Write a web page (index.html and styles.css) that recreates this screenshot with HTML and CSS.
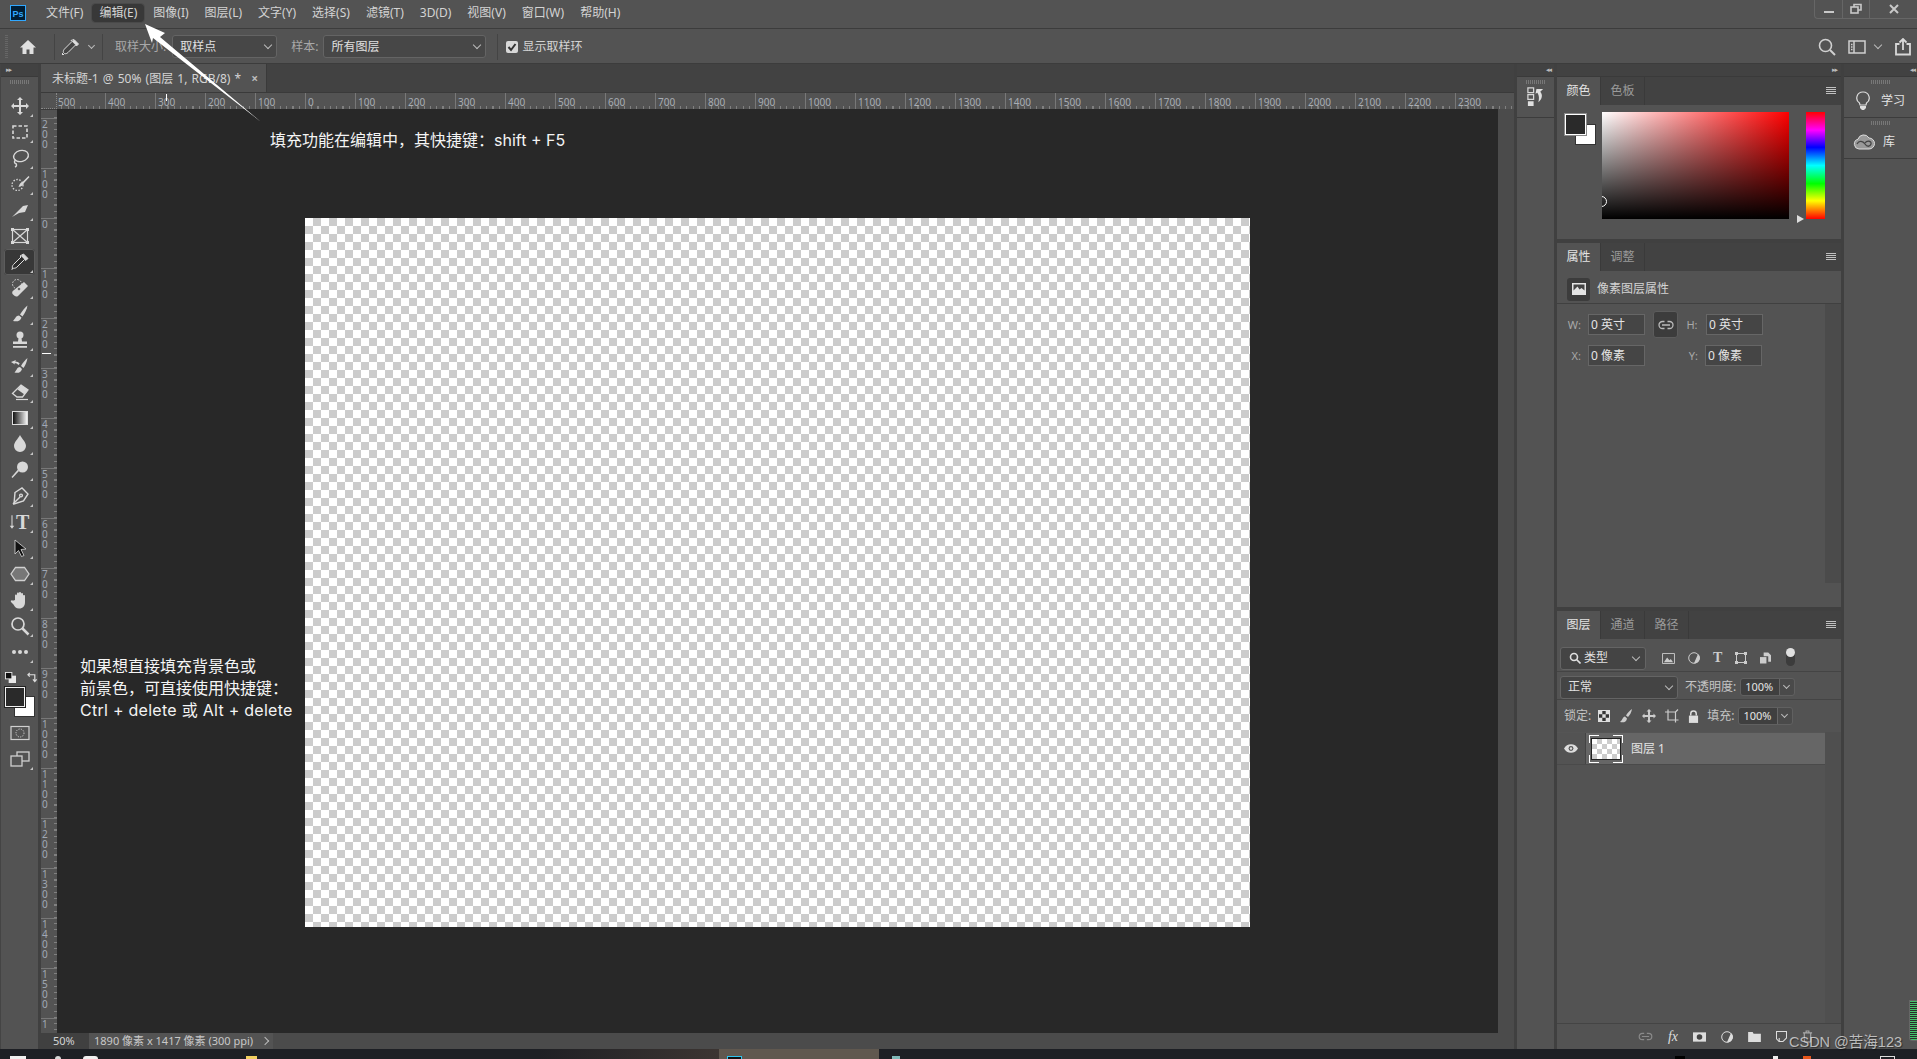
FILE: index.html
```html
<!DOCTYPE html>
<html lang="zh-CN">
<head>
  <meta charset="UTF-8" />
  <title>未标题-1 @ 50% (图层 1, RGB/8) *</title>
  <link rel="stylesheet" href="styles.css">
</head>
<body>
  <div class="menubar">
    <svg class="ps-logo" viewBox="0 0 16 16"><rect x="0.5" y="0.5" width="15" height="15" fill="#001e36" stroke="#31a8ff"/><text x="2.500" y="11.500" class="ps-text">Ps</text></svg>
    <nav class="menu">
      <span>文件(F)</span><span class="on">编辑(E)</span><span>图像(I)</span><span>图层(L)</span><span>文字(Y)</span><span>选择(S)</span><span>滤镜(T)</span><span>3D(D)</span><span>视图(V)</span><span>窗口(W)</span><span>帮助(H)</span>
    </nav>
    <div class="winctl">
      <span><svg viewBox="0 0 12 12" width="12" height="12"><rect x="1" y="8" width="10" height="2" fill="#c8c8c8"/></svg></span>
      <span><svg viewBox="0 0 12 12" width="12" height="12" fill="none" stroke="#c8c8c8" stroke-width="1.6"><rect x="1" y="4" width="7" height="6"/><path d="M4 4V1.5h7V7H8"/></svg></span>
      <span><svg viewBox="0 0 12 12" width="12" height="12" stroke="#c8c8c8" stroke-width="2"><path d="M2 2l8 8M10 2l-8 8"/></svg></span>
    </div>
  </div>

  <div class="optionsbar">
    <i class="grip-v"></i>
    <svg class="home" viewBox="0 0 18 18"><path d="M9 2L1 9.500h2.500V16h4v-4.500h3V16h4V9.500H17z" fill="#e0e0e0"/></svg>
    <i class="sep"></i>
    <svg class="ic eyedrop-opt" viewBox="0 0 20 20"><path d="M13 2.500l4.500 4.500-2 2-1-1-7.500 7.500c-1 1-2.500 1.500-3.500 1l-1.500 1.500-1-1 1.500-1.500c-.5-1 0-2.500 1-3.500l7.500-7.500-1-1z" fill="#444" stroke="#ddd"/><path d="M13 2.500l4.500 4.500-2 2-4.500-4.500z" fill="#ddd"/></svg>
    <i class="chev opt-chev"></i>
    <i class="sep"></i>
    <span class="opt-label">取样大小:</span>
    <div class="select sample-size">取样点<i class="chev"></i></div>
    <span class="opt-label sample-label">样本:</span>
    <div class="select sample-layers">所有图层<i class="chev"></i></div>
    <i class="sep sep-check"></i>
    <span class="check"><svg viewBox="0 0 12 12"><path d="M2.500 6l2.500 3 4.500-6" fill="none" stroke="#333" stroke-width="2"/></svg></span>
    <span class="opt-label check-label">显示取样环</span>
    <div class="opt-right">
      <svg class="ic" viewBox="0 0 20 20" fill="none" stroke="#d0d0d0" stroke-width="1.600"><circle cx="8.500" cy="8.500" r="6"/><path d="M13 13l5 5" stroke-width="2"/></svg>
      <svg class="ic workspace" viewBox="0 0 18 16" fill="none" stroke="#d0d0d0" stroke-width="1.500"><rect x="1" y="2" width="16" height="12"/><path d="M6 2v12M3 5.500h1.500M3 8h1.500M3 10.500h1.500" /></svg>
      <i class="chev"></i>
      <svg class="ic share" viewBox="0 0 18 18" fill="none" stroke="#d8d8d8" stroke-width="1.800"><path d="M5.500 6H2v10.500h14V6h-3.500M9 12V1.500M5.500 4.500L9 1l3.500 3.500"/></svg>
    </div>
  </div>

  <div class="workspace-row">
    <aside class="toolbar">
      <div class="strip"><span class="arrows">▸▸</span></div>
      <i class="grip"></i>
      <div class="tools">
        <div class="tool more"><svg class="ic" viewBox="0 0 20 20"><path d="M10 1l3 3h-2v5h5V7l3 3-3 3v-2h-5v5h2l-3 3-3-3h2v-5H4v2l-3-3 3-3v2h5V4H7z"/></svg></div>
        <div class="tool more"><svg class="ic" viewBox="0 0 20 20" fill="none" stroke="#d8d8d8" stroke-width="1.600"><rect x="3" y="4" width="14" height="12" stroke-dasharray="3.500 2"/></svg></div>
        <div class="tool more"><svg class="ic" viewBox="0 0 20 20" fill="none" stroke="#d8d8d8" stroke-width="1.400"><ellipse cx="11" cy="8" rx="7.500" ry="5.500" transform="rotate(-15 11 8)"/><path d="M6 12c-2 1-2 3-.500 3.500S7 18 5 19"/></svg></div>
        <div class="tool more"><svg class="ic" viewBox="0 0 20 20"><circle cx="7.500" cy="11" r="5.500" fill="none" stroke="#d8d8d8" stroke-dasharray="1.500 1.500" stroke-width="1.300"/><path d="M18.500 2l-6 6c-2 .5-3 2-4 5 3-.5 4.500-1.500 5.500-4l5.500-6z"/></svg></div>
        <div class="tool more"><svg class="ic" viewBox="0 0 20 20"><path d="M2 17L13 6l5-1-3 7-6 1z"/></svg></div>
        <div class="tool"><svg class="ic" viewBox="0 0 20 20" fill="none" stroke="#d8d8d8" stroke-width="1.200"><rect x="2.500" y="3.500" width="15" height="13"/><path d="M2.500 3.500l15 13M17.500 3.500l-15 13"/><path d="M1 2h3v3H1zM16 2h3v3h-3zM1 15h3v3H1zM16 15h3v3h-3z" fill="#d8d8d8" stroke="none"/></svg></div>
        <div class="tool active more"><svg class="ic" viewBox="0 0 20 20"><path d="M13.500 2l4.500 4.500-2.500 2-1-1-7.500 7.500c-1 1-2.500 1.500-3.500 1L2 17.500 2.500 16c-.500-1 0-2.500 1-3.500L11 5l-1-1z" fill="#2e2e2e" stroke="#e0e0e0"/><path d="M13.500 2L18 6.500 15.500 8.500 11 4z"/></svg></div>
        <div class="tool more"><svg class="ic" viewBox="0 0 20 20"><circle cx="7" cy="6" r="4.500" fill="none" stroke="#d8d8d8" stroke-dasharray="1.500 1.500"/><path d="M14 4l4 4L8 18c-1 .8-2.500.8-3.500-.2L3 16.500c-1-1-1-2.500-.2-3.500z"/><path d="M9 9.500l1.500 1.500L9 12.500 7.500 11z" fill="#555"/></svg></div>
        <div class="tool more"><svg class="ic" viewBox="0 0 20 20"><path d="M17.500 1.500c-2.500 2-5.500 5.500-7.500 9l2.500 2c2.500-3.500 4.500-7.500 5-11z"/><path d="M9 11.500c-3 0-3.500 3-6 5.500 4 1 7.500 0 8.500-3.500z"/></svg></div>
        <div class="tool more"><svg class="ic" viewBox="0 0 20 20"><circle cx="10" cy="5" r="3.500"/><path d="M8.500 8h3l.5 3.500h5V14H3v-2.500h5zM3 16h14v1.800H3z"/></svg></div>
        <div class="tool more"><svg class="ic" viewBox="0 0 20 20"><path d="M17.500 2c-2.500 2-5 5-6.500 8l2.500 2c2-3 3.500-6.500 4-10z"/><path d="M10 11c-3 0-3 3-5.500 5.500 3.500 1 6.500 0 7.500-3.500z"/><path d="M1 6l5-2-.8 1.500c2 0 3.500.8 4.500 2L8.500 9C7.500 7.800 6 7 4.500 7L5 8.500z"/></svg></div>
        <div class="tool more"><svg class="ic" viewBox="0 0 20 20"><path d="M11 3l7 5-5.500 7H7l-4.500-3.500z" fill="none" stroke="#d8d8d8" stroke-width="1.300"/><path d="M11 3l7 5-3.500 4.500-7-5z"/><path d="M6 17.500h12" stroke="#d8d8d8" stroke-width="1.200"/></svg></div>
        <div class="tool more"><span class="grad-ic"></span></div>
        <div class="tool more"><svg class="ic" viewBox="0 0 20 20"><path d="M10 1c2 4 6 7 6 11a6 6 0 0 1-12 0c0-4 4-7 6-11z"/></svg></div>
        <div class="tool more"><svg class="ic" viewBox="0 0 20 20"><circle cx="12.500" cy="7" r="5.500"/><path d="M9 11l-6.500 7-1-1 6.500-7.500z"/></svg></div>
        <div class="tool more"><svg class="ic" viewBox="0 0 20 20" fill="none" stroke="#d8d8d8" stroke-width="1.400"><path d="M5 6.500l7-4.500 6 6-4.500 7-9.500 3z"/><path d="M3 18l7-7"/><circle cx="11" cy="9.500" r="1.400"/></svg></div>
        <div class="tool type-tool more"><svg class="ic arrow-down" viewBox="0 0 8 20"><path d="M3.300 1h1.400v14H7l-3 4-3-4h2.300z"/></svg><span class="tool-t">T</span></div>
        <div class="tool more"><svg class="ic" viewBox="0 0 20 20"><path d="M5 2l11 9-5 .5 3 6-2.500 1-3-6L5 16z" fill="#111" stroke="#d8d8d8" stroke-width=".8"/></svg></div>
        <div class="tool more"><svg class="ic" viewBox="0 0 20 20"><path d="M5.500 3.500h9L19 10l-4.500 6.500h-9L1 10z" fill="#777" stroke="#d0d0d0" stroke-width="1.300"/></svg></div>
        <div class="tool more"><svg class="ic" viewBox="0 0 20 20"><path d="M5 10V5.500c0-1.500 2-1.500 2 0V3.500c0-1.500 2-1.500 2 0V3c0-1.500 2-1.500 2 0v1c0-1.500 2-1.500 2 0v2c0-1.300 2-1.300 2 0v6c0 4-2 6.500-6 6.500-3 0-4-1.500-5.500-4L1 12c-.8-1.300.8-2.300 1.800-1.300z"/></svg></div>
        <div class="tool more"><svg class="ic" viewBox="0 0 20 20" fill="none" stroke="#d8d8d8"><circle cx="8" cy="8" r="6" stroke-width="1.700"/><path d="M12.500 12.500l6 6" stroke-width="2.500"/></svg></div>
        <div class="tool more"><svg class="ic" viewBox="0 0 20 20"><circle cx="4" cy="10" r="2"/><circle cx="10" cy="10" r="2"/><circle cx="16" cy="10" r="2"/></svg></div>
      </div>
      <div class="swatch-tools">
        <svg class="mini-default" viewBox="0 0 12 12"><rect x="4" y="4" width="8" height="8" fill="#e8e8e8"/><rect x=".5" y=".5" width="7" height="7" fill="#111" stroke="#e8e8e8"/></svg>
        <svg class="mini-swap" viewBox="0 0 12 12" fill="none" stroke="#ddd" stroke-width="1.300"><path d="M1 3h7.500v7M3 1L1 3l2 2M6.500 8l2 2.500L10.500 8"/></svg>
      </div>
      <div class="swatches">
        <span class="bg-chip"></span>
        <span class="fg-chip"></span>
      </div>
      <div class="tool mask-tool"><svg class="ic" viewBox="0 0 20 16" fill="none" stroke="#d0d0d0"><rect x="1" y="1.500" width="18" height="13" stroke-width="1.200"/><circle cx="10" cy="8" r="4" stroke-dasharray="1.200 1.200"/></svg></div>
      <div class="tool more"><svg class="ic" viewBox="0 0 20 18" fill="none" stroke="#d0d0d0" stroke-width="1.300"><rect x="7" y="2" width="12" height="9"/><rect x="1" y="6" width="11" height="10" fill="#535353"/></svg></div>
    </aside>

    <main class="doc">
      <div class="tabbar">
        <div class="tab">未标题-1 @ 50% (图层 1, RGB/8) * <span class="tab-x">×</span></div>
      </div>
      <div class="ruler-top">
        <i class="ruler-corner"></i>
        <span>500</span><span>400</span><span>300</span><span>200</span><span>100</span><span>0</span><span>100</span><span>200</span><span>300</span><span>400</span><span>500</span><span>600</span><span>700</span><span>800</span><span>900</span><span>1000</span><span>1100</span><span>1200</span><span>1300</span><span>1400</span><span>1500</span><span>1600</span><span>1700</span><span>1800</span><span>1900</span><span>2000</span><span>2100</span><span>2200</span><span>2300</span>
        <i class="ruler-mark-x"></i>
      </div>
      <div class="doc-mid">
        <div class="ruler-left">
          <span>200</span><span>100</span><span>0</span><span>100</span><span>200</span><span>300</span><span>400</span><span>500</span><span>600</span><span>700</span><span>800</span><span>900</span><span>1000</span><span>1100</span><span>1200</span><span>1300</span><span>1400</span><span>1500</span><span>1</span>
          <i class="ruler-mark-y"></i>
        </div>
        <div class="pasteboard">
          <div class="canvas"></div>
        </div>
        <div class="vscroll"></div>
      </div>
      <div class="statusbar">
        <span class="zoom-pct">50%</span>
        <span class="doc-info">1890 像素 x 1417 像素 (300 ppi)<i class="chev-right"></i></span>
      </div>
    </main>

    <div class="dock dock-narrow">
      <div class="strip strip-right"><span class="arrows">◂◂</span></div>
      <div class="dock-item">
        <i class="grip"></i>
        <svg class="history-ic" viewBox="0 0 20 20"><path d="M2 1h6v5H2zM2 8h6v5H2z" fill="none" stroke="#d8d8d8" stroke-width="1.300"/><path d="M2 15h6v5H2zM11 2h7l-3 3c3 3 2 8-2 11 1-4 1-7-1-10l-2 1z" fill="#e0e0e0"/></svg>
      </div>
    </div>

    <div class="dock dock-main">
      <div class="strip strip-main"><span class="arrows">▸▸</span></div>

      <section class="panel panel-color">
        <div class="tabs"><span class="on">颜色</span><span>色板</span><i class="panel-menu"></i></div>
        <div class="color-body">
          <div class="color-chips"><span class="c-bg"></span><span class="c-fg"></span></div>
          <div class="picker"><i class="picker-handle"></i></div>
          <div class="hue"><i class="hue-arrow"></i></div>
        </div>
      </section>

      <section class="panel panel-props">
        <div class="tabs"><span class="on">属性</span><span>调整</span><i class="panel-menu"></i></div>
        <div class="props-head">
          <span class="props-icon"><svg viewBox="0 0 14 12" width="14" height="12"><path d="M0 0h14v12H0z" fill="#e4e4e4"/><path d="M1.500 1.500h11v6l-3-2.500-2 1.500-2-3-4 4z" fill="#444"/></svg></span>
          像素图层属性
        </div>
        <div class="props-body">
          <div class="props-fields">
            <div class="field-row">
              <label class="fl-w">W:</label><span class="num">0 英寸</span>
              <span class="link-btn"><svg viewBox="0 0 16 10" width="16" height="10" fill="none" stroke="#bbb" stroke-width="1.300"><path d="M6.500 1.500H4.500a3.500 3.500 0 0 0 0 7h2M9.500 1.500h2a3.500 3.500 0 0 1 0 7h-2M4 5h8"/></svg></span>
              <label class="fl-h">H:</label><span class="num">0 英寸</span>
            </div>
            <div class="field-row">
              <label class="fl-w">X:</label><span class="num">0 像素</span>
              <label class="fl-y">Y:</label><span class="num">0 像素</span>
            </div>
          </div>
          <div class="panel-scroll"></div>
        </div>
      </section>

      <section class="panel panel-layers">
        <div class="tabs"><span class="on">图层</span><span>通道</span><span>路径</span><i class="panel-menu"></i></div>
        <div class="layer-row-filter">
          <div class="select filter-select"><svg viewBox="0 0 12 12" width="12" height="12" fill="none" stroke="#e0e0e0" stroke-width="1.600"><circle cx="5" cy="5" r="3.500"/><path d="M7.500 7.500l4 4"/></svg>类型<i class="chev"></i></div>
          <div class="filter-icons">
            <svg viewBox="0 0 14 12" width="13" height="11"><path d="M.5.500h13v11H.5z" fill="none" stroke="#ccc"/><path d="M2 10l3.500-5 2.500 3 1.500-1.500L12 10z" fill="#ccc"/></svg>
            <svg viewBox="0 0 12 12" width="12" height="12"><circle cx="6" cy="6" r="5.300" fill="none" stroke="#ccc"/><path d="M10 2A5.300 5.300 0 0 1 6 11.300z" fill="#ccc"/></svg>
            <span class="filter-t">T</span>
            <svg viewBox="0 0 12 12" width="12" height="12" fill="none" stroke="#ccc"><rect x="1.500" y="1.500" width="9" height="9"/><path d="M0 0h3v3H0zM9 0h3v3H9zM0 9h3v3H0zM9 9h3v3H9z" fill="#ccc" stroke="none"/></svg>
            <svg viewBox="0 0 12 12" width="11" height="12"><path d="M4 0h5l3 3v7H9V4H4z" fill="#ccc"/><rect x="0" y="5" width="7" height="7" fill="#ccc"/></svg>
          </div>
          <span class="filter-toggle"><i></i></span>
        </div>
        <div class="layer-row-mode">
          <div class="select mode-select">正常<i class="chev"></i></div>
          <span class="mini-label">不透明度:</span>
          <span class="pct">100%<i class="chev"></i></span>
        </div>
        <div class="layer-row-lock">
          <span class="mini-label">锁定:</span>
          <div class="lock-icons">
            <svg viewBox="0 0 12 12" width="12" height="12"><rect x=".5" y=".5" width="11" height="11" fill="#333" stroke="#ddd"/><path d="M1 1h3.300v3.300H1zM7.700 1H11v3.300H7.700zM4.300 4.300h3.400v3.400H4.300zM1 7.700h3.300V11H1zM7.700 7.700H11V11H7.700z" fill="#ddd"/></svg>
            <svg viewBox="0 0 14 14" width="14" height="14"><path d="M13 0C11 1.500 8 4 7 6.500l2 1.500c2-2 3.500-5 4-8z" fill="#ccc"/><path d="M6 7.500C3.500 8 4 10.500 1 13c3.500 1 6.500 0 7-3.500z" fill="#ccc"/></svg>
            <svg viewBox="0 0 14 14" width="14" height="14"><path d="M7 0l2.500 2.500H8V6h3.500V4.500L14 7l-2.500 2.500V8H8v3.500h1.500L7 14l-2.500-2.500H6V8H2.500v1.500L0 7l2.500-2.500V6H6V2.500H4.500z" fill="#ccc"/></svg>
            <svg viewBox="0 0 14 14" width="14" height="14" fill="none" stroke="#ccc" stroke-width="1.200"><path d="M0 3h10.500v10.500M3 .5V11h10.500M10.500 3L13 .5" /></svg>
            <svg viewBox="0 0 12 14" width="11" height="13"><path d="M3 6V4a3 3 0 0 1 6 0v2" fill="none" stroke="#ddd" stroke-width="1.600"/><rect x="1" y="6" width="10" height="8" fill="#ddd"/></svg>
          </div>
          <span class="mini-label fill-label">填充:</span>
          <span class="pct">100%<i class="chev"></i></span>
        </div>
        <div class="layer-list">
          <div class="layer-item">
            <span class="eye-col"><svg viewBox="0 0 16 10" width="14" height="9"><path d="M0 5c3-6.500 13-6.500 16 0-3 6.500-13 6.500-16 0z" fill="#ddd"/><circle cx="8" cy="5" r="2.800" fill="#555"/><circle cx="8" cy="5" r="1.400" fill="#ddd"/></svg></span>
            <span class="thumb"><i></i></span>
            <span class="layer-name">图层 1</span>
          </div>
        </div>
        <div class="layer-foot">
          <svg viewBox="0 0 16 10" width="15" height="9" fill="none" stroke="#8a8a8a" stroke-width="1.300"><path d="M6.500 1.500H4.500a3.500 3.500 0 0 0 0 7h2M9.500 1.500h2a3.500 3.500 0 0 1 0 7h-2M4 5h8"/></svg>
          <span class="fx">fx</span>
          <svg viewBox="0 0 14 10" width="13" height="10"><path d="M0 0h14v10H0z" fill="#ddd"/><circle cx="7" cy="5" r="3" fill="#444"/></svg>
          <svg viewBox="0 0 12 12" width="12" height="12"><circle cx="6" cy="6" r="5.300" fill="none" stroke="#ddd"/><path d="M10 2A5.300 5.300 0 0 1 6 11.300z" fill="#ddd"/></svg>
          <svg viewBox="0 0 14 11" width="13" height="10"><path d="M0 0h5l1 2h8v9H0z" fill="#ddd"/></svg>
          <svg viewBox="0 0 12 12" width="11" height="11" fill="none" stroke="#ddd" stroke-width="1.200"><path d="M.5.500h11v7l-4 4h-4l-3-3z"/><path d="M3.500 7.500v4"/></svg>
          <svg viewBox="0 0 12 14" width="11" height="13" fill="none" stroke="#aaa" stroke-width="1.200"><path d="M1 3h10M2.500 3v10h7V3M4.500 3V1h3v2"/></svg>
        </div>
      </section>
    </div>

    <div class="dock dock-far">
      <div class="strip strip-right"><span class="arrows">◂◂</span></div>
      <div class="far-item">
        <i class="grip"></i>
        <div class="far-row">
          <svg viewBox="0 0 14 20" width="14" height="20"><path d="M7 1a6 6 0 0 1 3.500 11L10 14H4l-.5-2A6 6 0 0 1 7 1z" fill="none" stroke="#ddd" stroke-width="1.200"/><path d="M4 15h6v2l-2 2H6l-2-2z" fill="#ddd"/></svg>
          <span>学习</span>
        </div>
      </div>
      <div class="far-item">
        <i class="grip"></i>
        <div class="far-row">
          <svg class="cc-ic" viewBox="0 0 22 16" width="22" height="16"><path d="M6 15a5 5 0 0 1-1-9.800A6 6 0 0 1 16 4a5.500 5.500 0 0 1 0 11z" fill="#999" stroke="#ddd"/><path d="M4 10c2-4 6-3 8 0s5 3 6 0-4-4-6-1" fill="none" stroke="#444" stroke-width="1.300"/></svg>
          <span>库</span>
        </div>
      </div>
    </div>
  </div>

  <footer class="taskbar">
    <i class="tb-win"></i><i class="tb-circle"></i><i class="tb-white"></i><i class="tb-folder"></i>
    <span class="tb-warm"></span>
    <span class="tb-active"><i></i></span>
    <i class="tb-teal"></i><i class="tb-dark"></i><i class="tb-bit"></i><i class="tb-orange"></i><i class="tb-box"></i>
  </footer>

  <div class="note note-top">填充功能在编辑中，其快捷键：shift + F5</div>
  <div class="note note-left">如果想直接填充背景色或<br>前景色，可直接使用快捷键：<br><span class="note-latin">Ctrl + delete 或 Alt + delete</span></div>
  <svg class="pointer" viewBox="0 0 300 130" width="300" height="130"><path d="M145 24L165 33 160 37 261 122 153 38 152 43z" fill="#fff"/></svg>
  <i class="meter"></i>
  <div class="watermark">CSDN @苦海123</div>
</body>
</html>
```

FILE: styles.css
```css
* {
  box-sizing: border-box;
}
html, body {
  margin: 0;
  height: 100%;
}
body {
  width: 1917px;
  height: 1059px;
  overflow: hidden;
  position: relative;
  display: flex;
  flex-direction: column;
  background: #404040;
  color: #d4d4d4;
  font: 12px/16px "Noto Sans", "Noto Sans CJK SC", sans-serif;
}
i {
  display: block;
  font-style: normal;
}
svg {
  display: block;
  flex: none;
}
.ic {
  width: 20px;
  height: 20px;
}
.ic:not([fill]) {
  fill: #d8d8d8;
}
.chev {
  width: 6px;
  height: 6px;
  border-right: 1px solid #bbb;
  border-bottom: 1px solid #bbb;
  transform: rotate(45deg);
  flex: none;
}

/* menu */
.menubar {
  height: 29px;
  flex: none;
  display: flex;
  align-items: center;
  background: #535353;
  border-bottom: 1px solid #3c3c3c;
}
.ps-logo {
  width: 16px;
  height: 16px;
  margin: -2px 0 0 10px;
}
.ps-text {
  font: bold 9px "Liberation Sans", sans-serif;
  fill: #31a8ff;
}
.menu {
  display: flex;
  margin: -3px 0 0 13px;
  gap: 2px;
}
.menu span {
  padding: 0 7px;
  height: 18px;
  line-height: 18px;
  border-radius: 3px;
  white-space: nowrap;
}
.menu span.on {
  background: #383838;
  outline: 1px solid #4a4a4a;
}
.winctl {
  margin-left: auto;
  align-self: flex-start;
  display: flex;
  height: 19px;
  border: 1px solid #666;
  border-top: 0;
  border-right: 0;
  border-radius: 0 0 0 4px;
}
.winctl span {
  width: 27px;
  display: flex;
  align-items: center;
  justify-content: center;
  border-left: 1px solid #666;
}
.winctl span:first-child {
  border-left: 0;
}
.winctl span:last-child {
  width: 48px;
}

/* options */
.optionsbar {
  height: 35px;
  flex: none;
  display: flex;
  align-items: center;
  background: #535353;
  border-bottom: 1px solid #3c3c3c;
  padding: 1px 0 0 5px;
}
.grip-v {
  width: 3px;
  height: 24px;
  background: repeating-linear-gradient(to bottom, #666 0 1px, transparent 1px 2px);
}
.home {
  width: 18px;
  height: 18px;
  margin-left: 11px;
}
.sep {
  width: 1px;
  height: 26px;
  background: #444;
  margin-left: 17px;
}
.eyedrop-opt {
  margin-left: 6px;
}
.opt-chev {
  width: 5px;
  height: 5px;
  margin: -3px 0 0 8px;
}
.optionsbar .opt-chev + .sep {
  margin-left: 8px;
}
.opt-label {
  color: #a8a8a8;
  margin-left: 12px;
  white-space: nowrap;
}
.select {
  height: 23px;
  display: flex;
  align-items: center;
  padding: 0 9px 0 7px;
  background: #474747;
  border: 1px solid #646464;
  border-radius: 3px;
  color: #e0e0e0;
  justify-content: space-between;
  flex: none;
}
.select .chev {
  margin: -3px -4px 0 0;
}
.sample-size {
  width: 105px;
  margin-left: 6px;
}
.sample-label {
  margin-left: 14px;
}
.sample-layers {
  width: 163px;
  margin-left: 5px;
}
.sep-check {
  margin-left: 11px;
}
.check {
  width: 12px;
  height: 12px;
  margin-left: 8px;
  background: #d8d8d8;
  border-radius: 2px;
}
.check svg {
  width: 12px;
  height: 12px;
}
.check-label {
  margin-left: 4px;
  color: #d4d4d4;
}
.opt-right {
  margin-left: auto;
  display: flex;
  align-items: center;
  padding-right: 5px;
}
.workspace {
  width: 18px;
  height: 16px;
  margin-left: 11px;
}
.opt-right .chev {
  margin: -4px 0 0 9px;
}
.share {
  width: 18px;
  height: 18px;
  margin-left: 13px;
}

/* main row */
.workspace-row {
  height: 985px;
  flex: none;
  display: flex;
  gap: 3px;
  background: #404040;
}
.strip {
  height: 13px;
  background: #424242;
  display: flex;
  align-items: center;
  padding-left: 5px;
  border-bottom: 1px solid #3a3a3a;
  flex: none;
}
.strip-right {
  justify-content: flex-end;
  padding: 0 3px 0 0;
}
.strip-main {
  justify-content: flex-end;
  padding: 0 4px 0 0;
}
.arrows {
  font: 7px/10px "DejaVu Sans", sans-serif;
  letter-spacing: -1px;
  color: #bbb;
}
.grip {
  width: 20px;
  height: 4px;
  margin: 3px auto;
  background: repeating-linear-gradient(to right, #777 0 1px, transparent 1px 2px);
}

/* tools */
.toolbar {
  width: 38px;
  flex: none;
  display: flex;
  flex-direction: column;
  background: #535353;
  border-left: 1px solid #444;
}
.tools {
  margin-top: 6px;
}
.tool {
  height: 26px;
  margin: 0 3px;
  display: flex;
  align-items: center;
  justify-content: center;
  position: relative;
  border-radius: 3px;
}
.tool.more::after {
  content: "";
  position: absolute;
  right: 2px;
  bottom: 2px;
  border-left: 3px solid transparent;
  border-bottom: 3px solid #c4c4c4;
}
.tool.active {
  background: #383838;
  outline: 1px solid #5c5c5c;
  outline-offset: -1px;
}
.grad-ic {
  width: 16px;
  height: 14px;
  background: linear-gradient(to right, #111, #f4f4f4);
  border: 1px solid #ddd;
}
.type-tool {
  justify-content: flex-start;
  padding-left: 5px;
  gap: 1px;
}
.arrow-down {
  width: 6px;
  height: 16px;
}
.tool-t {
  font: bold 20px/20px "Liberation Serif", serif;
  color: #d8d8d8;
}
.swatch-tools {
  height: 14px;
  margin-top: 5px;
  display: flex;
  align-items: center;
  padding-left: 4px;
}
.mini-default {
  width: 11px;
  height: 11px;
}
.mini-swap {
  width: 11px;
  height: 11px;
  margin-left: 11px;
}
.swatches {
  height: 29px;
  margin: 3px 0 4px 4px;
  position: relative;
}
.fg-chip {
  position: absolute;
  left: 0;
  top: 0;
  width: 20px;
  height: 20px;
  background: #2a2a2a;
  border: 1px solid #f0f0f0;
  outline: 1px solid #222;
}
.bg-chip {
  position: absolute;
  left: 10px;
  top: 10px;
  width: 19px;
  height: 19px;
  background: #fff;
  outline: 1px solid #333;
}
.mask-tool .ic {
  height: 16px;
}

/* document */
.doc {
  width: 1473px;
  flex: none;
  display: flex;
  flex-direction: column;
  background: #535353;
}
.tabbar {
  height: 29px;
  flex: none;
  background: #424242;
  border-bottom: 1px solid #3a3a3a;
}
.tab {
  width: 226px;
  height: 28px;
  line-height: 30px;
  background: #535353;
  padding-left: 11px;
  color: #d4d4d4;
  border-right: 1px solid #3a3a3a;
  white-space: nowrap;
  font-size: 12px;
  word-spacing: 1px;
}
.tab-x {
  margin-left: 6px;
  font-weight: bold;
  color: #bbb;
}
.ruler-top {
  height: 16px;
  flex: none;
  display: flex;
  position: relative;
  overflow: hidden;
  padding-left: 14px;
  background:
    repeating-linear-gradient(to right, #808080 0 1px, transparent 1px 6.25px) 14px 100% / 100% 3px no-repeat,
    #535353;
  color: #a8adb4;
  font-size: 10px;
  line-height: 18px;
}
.ruler-top span {
  width: 50px;
  flex: none;
  padding-left: 2px;
  border-left: 1px solid #787878;
}
.ruler-corner {
  position: absolute;
  left: 0;
  top: 0;
  width: 16px;
  height: 16px;
  background: #535353;
  border-right: 1px dotted #888;
  border-bottom: 1px dotted #888;
}
.ruler-mark-x {
  position: absolute;
  left: 125px;
  top: 1px;
  width: 1px;
  height: 7px;
  background: #fff;
}
.doc-mid {
  flex: 1;
  min-height: 0;
  display: flex;
}
.ruler-left {
  width: 16px;
  flex: none;
  padding-top: 8px;
  position: relative;
  overflow: hidden;
  border-top: 1px solid #3a3a3a;
  background:
    repeating-linear-gradient(to bottom, #808080 0 1px, transparent 1px 6.25px) 100% 7px / 3px 100% no-repeat,
    #535353;
}
.ruler-left span {
  display: block;
  height: 50px;
  width: 100%;
  padding: 0 7px 0 1px;
  border-top: 1px solid #787878;
  color: #a0a8b4;
  font-size: 10px;
  line-height: 10px;
  word-break: break-all;
}
.ruler-mark-y {
  position: absolute;
  left: 1px;
  top: 243px;
  width: 9px;
  height: 1px;
  background: #fff;
}
.pasteboard {
  flex: 1;
  min-width: 0;
  background: #282828;
  display: flex;
  align-items: center;
  justify-content: center;
  padding-top: 2px;
}
.canvas {
  width: 945px;
  height: 709px;
  flex: none;
  background: repeating-conic-gradient(#ccc 0 25%, #fff 0 50%) 0 0 / 16px 16px;
}
.vscroll {
  width: 16px;
  flex: none;
  background: #4b4b4b;
}
.statusbar {
  height: 16px;
  flex: none;
  display: flex;
  background: #4b4b4b;
  font-size: 11px;
  line-height: 16px;
}
.zoom-pct {
  width: 48px;
  padding-left: 12px;
  background: #404040;
  color: #d4d4d4;
}
.doc-info {
  width: 184px;
  padding-left: 5px;
  background: #535353;
  color: #c8c8c8;
  display: flex;
  align-items: center;
  white-space: nowrap;
}
.chev-right {
  width: 6px;
  height: 6px;
  margin-left: 9px;
  border-right: 1px solid #bbb;
  border-top: 1px solid #bbb;
  transform: rotate(45deg);
  flex: none;
}

/* docks */
.dock {
  flex: none;
  display: flex;
  flex-direction: column;
}
.dock-narrow {
  width: 37px;
}
.dock-item {
  height: 41px;
  background: #535353;
  border-bottom: 1px solid #3c3c3c;
}
.dock-narrow::after,
.dock-far::after {
  content: "";
  flex: 1;
  background: #535353;
}
.history-ic {
  width: 19px;
  height: 19px;
  margin: 0 auto;
}
.dock-main {
  width: 284px;
}
.panel {
  background: #535353;
  display: flex;
  flex-direction: column;
}
.panel-color {
  height: 162px;
}
.panel-props {
  height: 364px;
  margin-top: 4px;
}
.panel-layers {
  flex: 1;
  min-height: 0;
  margin-top: 4px;
}
.tabs {
  height: 28px;
  flex: none;
  display: flex;
  align-items: stretch;
  background: #424242;
  position: relative;
}
.tabs span {
  width: 44px;
  text-align: center;
  line-height: 28px;
  color: #9a9a9a;
  border-right: 1px solid #3a3a3a;
}
.tabs span.on {
  background: #535353;
  color: #e4e4e4;
}
.panel-menu {
  position: absolute;
  right: 5px;
  top: 10px;
  width: 10px;
  height: 8px;
  background: repeating-linear-gradient(to bottom, #c0c0c0 0 1px, transparent 1px 2px);
}
.color-body {
  flex: 1;
  display: flex;
  align-items: flex-start;
  padding: 7px 0 0 45px;
  position: relative;
}
.color-chips {
  position: absolute;
  left: 8px;
  top: 9px;
  width: 31px;
  height: 31px;
}
.c-fg {
  position: absolute;
  left: 0;
  top: 0;
  width: 21px;
  height: 21px;
  background: #2a2a2a;
  border: 1px solid #fff;
  outline: 1px solid #8a8a8a;
}
.c-bg {
  position: absolute;
  left: 11px;
  top: 11px;
  width: 19px;
  height: 19px;
  background: #fff;
  outline: 1px solid #333;
}
.picker {
  width: 187px;
  height: 107px;
  position: relative;
  overflow: hidden;
  background: linear-gradient(to top, #000, rgba(0, 0, 0, 0)), linear-gradient(to right, #fff, #f00);
}
.picker-handle {
  position: absolute;
  left: -6px;
  top: 84px;
  width: 11px;
  height: 11px;
  border: 1px solid #fff;
  border-radius: 50%;
}
.hue {
  width: 19px;
  height: 107px;
  margin-left: 17px;
  position: relative;
  background: linear-gradient(to bottom, #f00, #f0f 17%, #00f 33%, #0ff 50%, #0f0 67%, #ff0 83%, #f00);
}
.hue-arrow {
  position: absolute;
  left: -9px;
  top: 103px;
  border-left: 7px solid #ddd;
  border-top: 4px solid transparent;
  border-bottom: 4px solid transparent;
}
.props-head {
  height: 33px;
  flex: none;
  display: flex;
  align-items: center;
  gap: 7px;
  padding: 4px 0 0 10px;
  border-bottom: 1px solid #404040;
}
.props-icon {
  width: 23px;
  height: 23px;
  background: #3c3c3c;
  border-radius: 3px;
  display: flex;
  align-items: center;
  justify-content: center;
}
.props-body {
  flex: 1;
  display: flex;
  min-height: 0;
}
.props-fields {
  flex: 1;
  padding-top: 10px;
}
.panel-scroll {
  width: 16px;
  background: #4b4b4b;
  margin-bottom: 24px;
}
.field-row {
  height: 21px;
  display: flex;
  align-items: center;
  margin-bottom: 10px;
}
.field-row label {
  color: #a8a8a8;
  font-size: 11px;
  white-space: nowrap;
}
.fl-w {
  width: 31px;
  text-align: right;
  padding-right: 7px;
}
.fl-h {
  width: 28px;
  text-align: center;
}
.fl-y {
  width: 60px;
  text-align: right;
  padding-right: 7px;
}
.num {
  width: 57px;
  height: 21px;
  line-height: 19px;
  padding-left: 2px;
  background: #454545;
  border: 1px solid #666;
  color: #e4e4e4;
  white-space: nowrap;
}
.link-btn {
  width: 25px;
  height: 27px;
  margin-left: 8px;
  display: flex;
  align-items: center;
  justify-content: center;
  background: #3c3c3c;
  border: 1px solid #5c5c5c;
  border-radius: 3px;
}
.layer-row-filter,
.layer-row-mode,
.layer-row-lock {
  flex: none;
  display: flex;
  align-items: center;
  border-bottom: 1px solid #444;
}
.layer-row-filter {
  height: 33px;
  padding: 6px 0 0 3px;
}
.filter-select {
  width: 86px;
  justify-content: flex-start;
  gap: 3px;
  padding: 0 0 0 8px;
  background: #444;
}
.filter-select .chev {
  margin-left: auto;
  margin-right: 6px;
}
.filter-icons {
  display: flex;
  align-items: center;
  gap: 13px;
  margin-left: 16px;
}
.filter-t {
  font: bold 14px/14px "Liberation Serif", serif;
  color: #ccc;
}
.filter-toggle {
  width: 9px;
  height: 17px;
  margin-left: 15px;
  margin-top: -2px;
  background: #3c3c3c;
  border-radius: 5px;
  position: relative;
}
.filter-toggle i {
  position: absolute;
  left: 0;
  top: -1px;
  width: 9px;
  height: 9px;
  border-radius: 50%;
  background: #e0e0e0;
}
.layer-row-mode {
  height: 28px;
  padding: 3px 0 0 3px;
}
.mode-select {
  width: 118px;
  background: #444;
}
.mini-label {
  margin-left: 7px;
  color: #c4c4c4;
  white-space: nowrap;
  font-size: 12px;
}
.pct {
  margin-left: 4px;
  width: 55px;
  height: 18px;
  display: flex;
  align-items: center;
  justify-content: space-between;
  padding: 0 5px 0 4px;
  background: linear-gradient(to right, #3f3f3f 0 38px, #666 38px 39px, #4a4a4a 39px);
  border: 1px solid #606060;
  border-radius: 3px;
  color: #e4e4e4;
  font-size: 11px;
}
.pct .chev {
  width: 5px;
  height: 5px;
  margin-top: -3px;
}
.layer-row-lock {
  height: 32px;
  border-bottom: 0;
}
.lock-icons {
  display: flex;
  align-items: center;
  gap: 9px;
  margin-left: 7px;
}
.fill-label {
  margin-left: 8px;
}
.layer-list {
  flex: 1;
  min-height: 0;
  margin-right: 16px;
  box-shadow: 16px 0 0 #4f4f4f;
}
.layer-item {
  height: 33px;
  display: flex;
  align-items: center;
  background: #666;
  border-top: 1px solid #555;
  border-bottom: 1px solid #4a4a4a;
}
.eye-col {
  width: 29px;
  height: 100%;
  display: flex;
  align-items: center;
  justify-content: center;
  background: #535353;
  border-right: 1px solid #444;
}
.thumb {
  width: 34px;
  height: 28px;
  margin-left: 3px;
  padding: 3px 2px;
  background:
    linear-gradient(#fff, #fff) 0 0 / 10px 1px no-repeat,
    linear-gradient(#fff, #fff) 0 0 / 1px 8px no-repeat,
    linear-gradient(#fff, #fff) 100% 0 / 10px 1px no-repeat,
    linear-gradient(#fff, #fff) 100% 0 / 1px 8px no-repeat,
    linear-gradient(#fff, #fff) 0 100% / 10px 1px no-repeat,
    linear-gradient(#fff, #fff) 0 100% / 1px 8px no-repeat,
    linear-gradient(#fff, #fff) 100% 100% / 10px 1px no-repeat,
    linear-gradient(#fff, #fff) 100% 100% / 1px 8px no-repeat;
}
.thumb i {
  width: 100%;
  height: 100%;
  border: 1px solid #222;
  background: repeating-conic-gradient(#ccc 0 25%, #fff 0 50%) 0 0 / 10px 10px;
}
.layer-name {
  margin-left: 8px;
  color: #e4e4e4;
}
.layer-foot {
  height: 26px;
  flex: none;
  display: flex;
  align-items: center;
  justify-content: flex-end;
  gap: 15px;
  padding-right: 28px;
  border-top: 1px solid #444;
}
.fx {
  font: italic 14px/14px "Liberation Serif", serif;
  color: #ddd;
}
.dock-far {
  width: 74px;
}
.far-item {
  height: 41px;
  background: #535353;
  border-bottom: 1px solid #3c3c3c;
}
.far-row {
  display: flex;
  align-items: center;
  gap: 11px;
  padding-left: 12px;
  height: 27px;
  color: #e4e4e4;
}
.far-row .cc-ic {
  margin-left: -3px;
  margin-right: -3px;
}

/* taskbar */
.taskbar {
  height: 10px;
  flex: 1;
  display: flex;
  align-items: flex-end;
  background: #1d1f24;
}
.taskbar i {
  height: 3px;
  flex: none;
}
.tb-win {
  width: 16px;
  margin-left: 10px;
  background: #f0f0f0;
}
.tb-circle {
  width: 6px;
  margin-left: 29px;
  background: #d8d8d8;
  border-radius: 3px 3px 0 0;
}
.tb-white {
  width: 15px;
  margin-left: 22px;
  background: #f0f0f0;
  border-radius: 4px 4px 0 0;
}
.tb-folder {
  width: 11px;
  margin-left: 148px;
  background: #f2d060;
}
.tb-warm {
  width: 179px;
  height: 10px;
  margin-left: 283px;
  background: linear-gradient(to right, #1f2024, #3c3532);
}
.tb-active {
  width: 160px;
  height: 10px;
  padding: 7px 0 0 8px;
  background: #60584f;
}
.tb-active i {
  width: 15px;
  height: 3px;
  border: 1px solid #2ec4f0;
  border-bottom: 0;
  background: #111;
}
.tb-teal {
  width: 8px;
  margin-left: 13px;
  background: #7fb8b8;
}
.tb-dark {
  width: 10px;
  margin-left: 775px;
  background: #000;
}
.tb-bit {
  width: 5px;
  margin-left: 88px;
  background: #eee;
}
.tb-orange {
  width: 8px;
  margin-left: 25px;
  background: #e8571c;
}
.tb-box {
  width: 15px;
  margin-left: 69px;
  border: 1px solid #ddd;
  border-bottom: 0;
}

/* overlays */
.note {
  position: absolute;
  color: #f4f4f4;
  font: 16px/22px Inter, "Noto Sans CJK SC", sans-serif;
  white-space: nowrap;
}
.note-latin {
  letter-spacing: 0.27px;
}
.note-top {
  left: 270px;
  top: 129px;
}
.note-left {
  left: 80px;
  top: 655px;
}
.pointer {
  position: absolute;
  left: 0;
  top: 0;
  pointer-events: none;
}
.meter {
  position: absolute;
  right: 0;
  top: 1000px;
  width: 8px;
  height: 41px;
  background: repeating-linear-gradient(to bottom, #45c46a 0 1px, #2c2c2c 1px 2px);
  border: 1px solid #666;
  border-right: 0;
  border-radius: 0 0 0 3px;
}
.watermark {
  position: absolute;
  left: 1789px;
  top: 1032px;
  font: 14.500px/20px "Liberation Sans", "Noto Sans CJK SC", sans-serif;
  color: rgba(235, 235, 235, 0.72);
  text-shadow: 1px 1px 1px rgba(0, 0, 0, 0.45);
  white-space: nowrap;
}
```
